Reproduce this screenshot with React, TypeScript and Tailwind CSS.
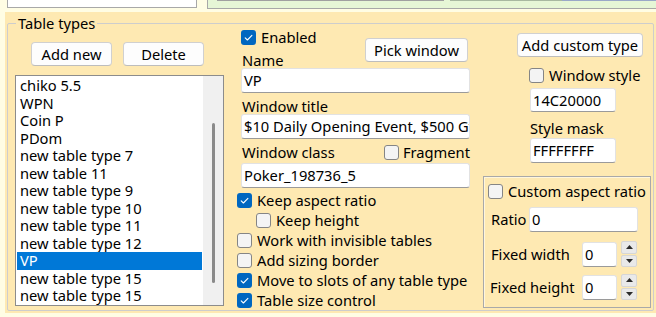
import React from "react";

function Check({ checked }: { checked?: boolean }) {
  return checked ? (
    <span className="w-[15px] h-[15px] rounded-[3px] bg-[#0067c0] flex items-center justify-center shrink-0">
      <svg width="11" height="11" viewBox="0 0 11 11">
        <path d="M2.2 5.8 L4.4 8 L8.9 3.3" fill="none" stroke="#ffffff" strokeWidth="1.1" strokeLinecap="round" strokeLinejoin="round" />
      </svg>
    </span>
  ) : (
    <span className="w-[15px] h-[15px] rounded-[3px] bg-[#f4f4f4] border border-[#858585] shrink-0" />
  );
}

function CheckRow({ checked, className = "", children }: { checked?: boolean; className?: string; children: React.ReactNode }) {
  return (
    <div className={`h-[20px] flex items-center gap-[5px] whitespace-nowrap ${className}`}>
      <Check checked={checked} />
      <span className="leading-[20px]">{children}</span>
    </div>
  );
}

function Btn({ className = "", children }: { className?: string; children: React.ReactNode }) {
  return (
    <div className={`h-[24px] shrink-0 rounded-[4px] border border-[#d0d0d0] border-b-[#bdbdbd] bg-[#fdfdfd] flex items-center justify-center leading-none whitespace-nowrap ${className}`}>
      {children}
    </div>
  );
}

function Field({ value, className = "" }: { value: string; className?: string }) {
  return (
    <div className={`shrink-0 bg-white border border-[#e2e2e2] border-b-[#9a9a9a] rounded-[3px] pl-[2px] flex items-center overflow-hidden whitespace-nowrap leading-none ${className}`}>
      {value}
    </div>
  );
}

function Spinner() {
  return (
    <div className="ml-[4px] w-[16px] h-[26px] flex flex-col gap-[1px] shrink-0">
      <div className="flex-1 bg-[#e9e9e9] border border-[#d6d6d6] rounded-[2px] flex items-center justify-center">
        <svg width="7" height="4" viewBox="0 0 7 4"><path d="M0 4 L3.5 0 L7 4 Z" fill="#2b2b2b" /></svg>
      </div>
      <div className="flex-1 bg-[#e9e9e9] border border-[#d6d6d6] rounded-[2px] flex items-center justify-center">
        <svg width="7" height="4" viewBox="0 0 7 4"><path d="M0 0 L7 0 L3.5 4 Z" fill="#2b2b2b" /></svg>
      </div>
    </div>
  );
}

const items = [
  "chiko 5.5",
  "WPN",
  "Coin P",
  "PDom",
  "new table type 7",
  "new table 11",
  "new table type 9",
  "new table type 10",
  "new table type 11",
  "new table type 12",
  "VP",
  "new table type 15",
  "new table type 15",
];

export default function App() {
  return (
    <div className="w-[656px] h-[317px] overflow-hidden bg-[#fffde4] font-['Noto_Sans',sans-serif] text-[14.7px] text-black">
      {/* top strip */}
      <div className="flex h-[12px] items-start">
        <div className="ml-[7px] w-[190px] h-[8px] bg-white border border-t-0 border-[#a8a8a8]" />
        <div className="ml-[10px] flex-1 h-[9px] bg-[#e6f6d6] border-l border-b border-[#a8a8a8] flex items-start">
          <div className="ml-[9px] w-[227px] h-[1px] bg-[#a0a0a0]" />
          <div className="ml-[6px] w-[112px] h-[1px] bg-[#a8b8a0]" />
          <div className="flex-1 h-[1px] bg-[#9aa8c8]" />
        </div>
      </div>

      {/* main panel */}
      <div className="ml-[5px] h-[301px] bg-[#fee9b2] pt-[11px] pl-[2px] pr-[2px]">
        <div className="relative h-[288px] border border-[#cdcdcd] rounded-[2px] flex">
          <span className="absolute left-[8px] -top-[11px] px-[2px] leading-[20px] bg-[#fee9b2]">Table types</span>

          {/* left column */}
          <div className="ml-[7px] w-[209px] flex flex-col shrink-0">
            <div className="mt-[18px] flex">
              <Btn className="ml-[16px] w-[81px]">Add new</Btn>
              <Btn className="ml-[11px] w-[81px]">Delete</Btn>
            </div>
            <div className="mt-[9px] h-[231px] border border-[#8c8c8c] bg-white flex">
              <div className="flex-1 pt-[1px] pl-[1px] pr-[1px] flex flex-col">
                {items.map((t, i) => (
                  <div
                    key={i}
                    className={
                      i === 10
                        ? "h-[17.5px] leading-[17.5px] pl-[3px] bg-[#0078d7] text-white whitespace-nowrap"
                        : "h-[17.5px] leading-[17.5px] pl-[3px] whitespace-nowrap"
                    }
                  >
                    {t}
                  </div>
                ))}
              </div>
              <div className="w-[20px] bg-[#f0f0f0] flex justify-center">
                <div className="mt-[47px] w-[3px] h-[160px] rounded-full bg-[#8a8a8a]" />
              </div>
            </div>
          </div>

          {/* middle column */}
          <div className="ml-[13px] w-[233px] flex flex-col shrink-0">
            <div className="flex justify-between">
              <div className="flex flex-col pl-[4px]">
                <CheckRow checked className="mt-[3px]">Enabled</CheckRow>
                <div className="mt-[5px] h-[16px] leading-[16px] pl-[1px]">Name</div>
              </div>
              <Btn className="mt-[14px] mr-[2px] w-[103px]">Pick window</Btn>
            </div>
            <Field className="ml-[4px] w-[229px] h-[25px]" value="VP" />
            <div className="mt-[5px] ml-[5px] h-[16px] leading-[16px]">Window title</div>
            <Field className="ml-[4px] w-[229px] h-[25px]" value="$10 Daily Opening Event, $500 Gtd" />
            <div className="mt-[5px] ml-[5px] h-[16px] flex items-center justify-between">
              <span className="leading-[16px]">Window class</span>
              <div className="flex items-center gap-[4px]">
                <Check />
                <span className="leading-[16px]">Fragment</span>
              </div>
            </div>
            <Field className="mt-[3px] ml-[4px] w-[229px] h-[25px]" value="Poker_198736_5" />
            <CheckRow checked className="mt-[2px]">Keep aspect ratio</CheckRow>
            <CheckRow className="ml-[19px]">Keep height</CheckRow>
            <CheckRow>Work with invisible tables</CheckRow>
            <CheckRow>Add sizing border</CheckRow>
            <CheckRow checked>Move to slots of any table type</CheckRow>
            <CheckRow checked>Table size control</CheckRow>
          </div>

          {/* right column */}
          <div className="ml-[13px] w-[168px] flex flex-col shrink-0">
            <Btn className="mt-[9px] ml-[34px] w-[126px]">Add custom type</Btn>
            <CheckRow className="mt-[8px] ml-[46px]">Window style</CheckRow>
            <Field className="mt-[3px] ml-[47px] w-[86px] h-[24px]" value="14C20000" />
            <div className="mt-[8px] ml-[47px] h-[16px] leading-[16px]">Style mask</div>
            <Field className="mt-[2px] ml-[47px] w-[86px] h-[25px]" value="FFFFFFFF" />
            <div className="mt-[13px] h-[132px] border border-[#a9a9a9] shadow-[inset_1px_1px_0_#fff6dc] flex flex-col">
              <CheckRow className="mt-[4px] ml-[4px]">Custom aspect ratio</CheckRow>
              <div className="mt-[6px] pl-[7px] flex items-center h-[25px]">
                <span className="w-[38px] whitespace-nowrap">Ratio</span>
                <Field className="w-[109px] h-[25px]" value="0" />
              </div>
              <div className="mt-[9px] pl-[7px] flex items-center h-[26px]">
                <span className="w-[91px] whitespace-nowrap">Fixed width</span>
                <Field className="w-[35px] h-[25px]" value="0" />
                <Spinner />
              </div>
              <div className="mt-[7px] pl-[6px] flex items-center h-[26px]">
                <span className="w-[92px] whitespace-nowrap">Fixed height</span>
                <Field className="w-[35px] h-[25px]" value="0" />
                <Spinner />
              </div>
            </div>
          </div>
        </div>
      </div>
    </div>
  );
}
